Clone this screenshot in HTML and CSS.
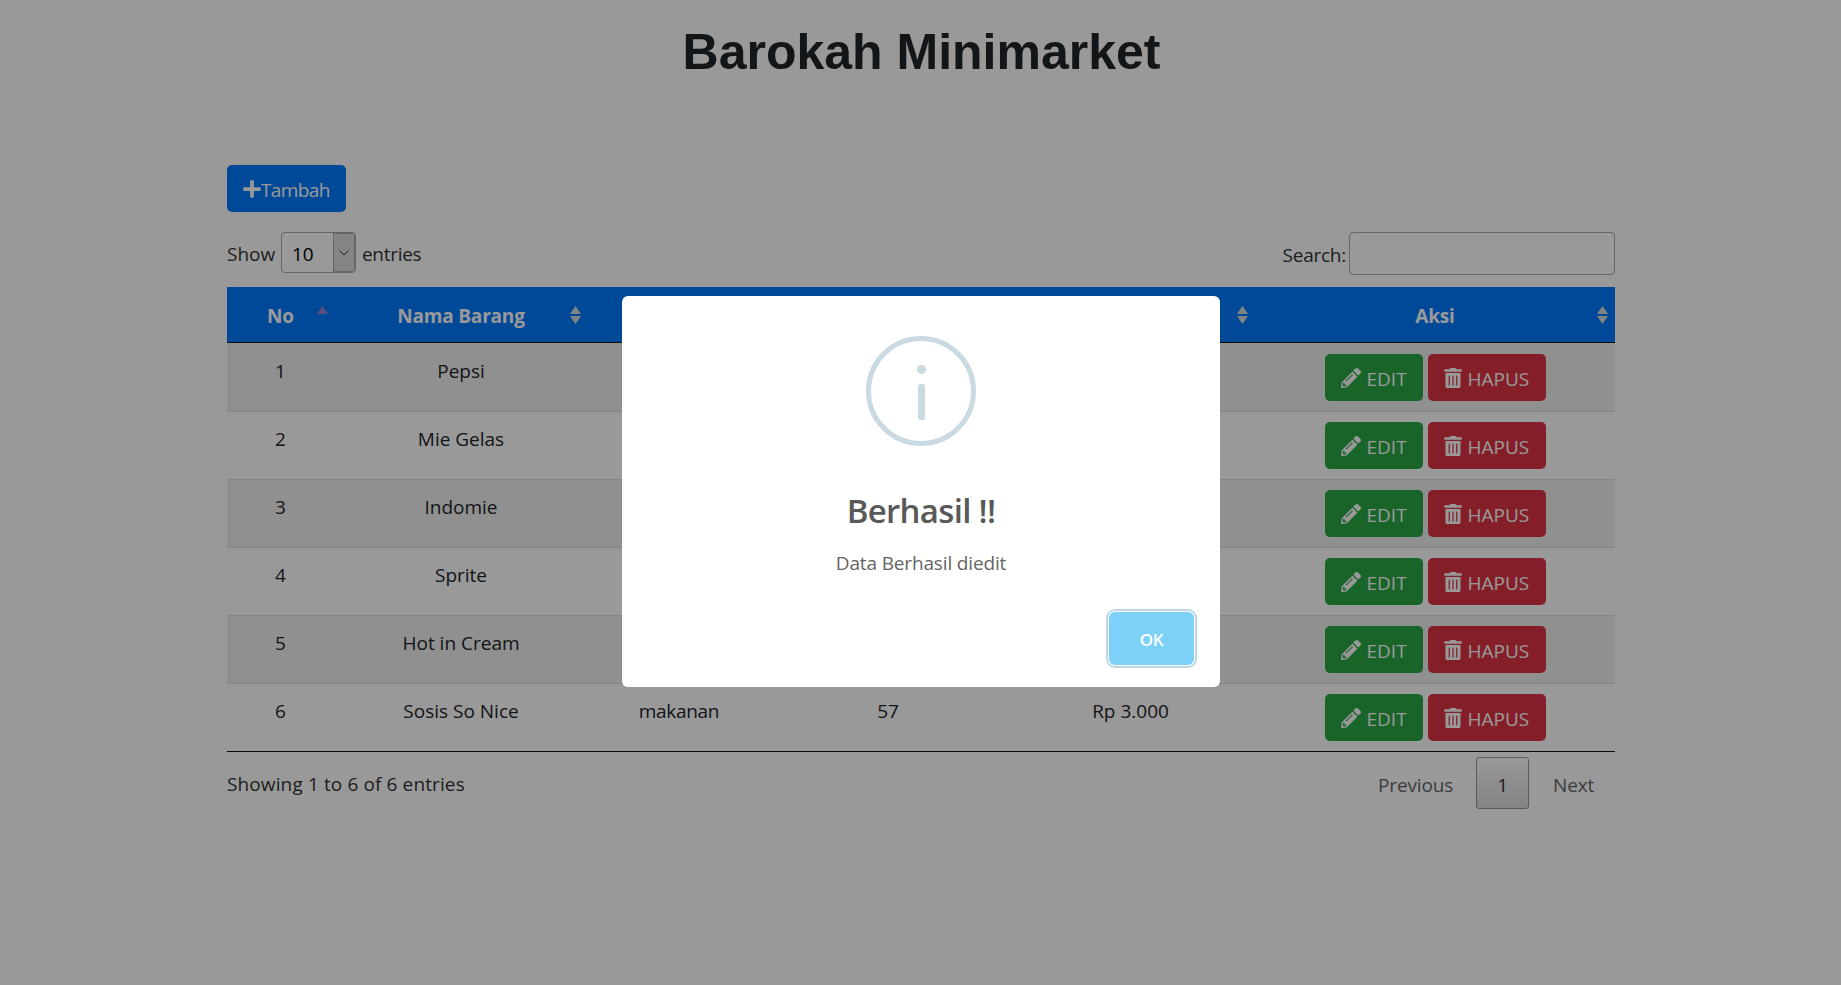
FILE: index.html
```html
<!DOCTYPE html>
<html lang="id">
<head>
<meta charset="utf-8">
<title>Barokah Minimarket</title>
<link rel="stylesheet" href="styles.css">
</head>
<body>
<svg width="0" height="0" class="sprite" aria-hidden="true">
  <symbol id="plus" viewBox="0 0 448 512"><path d="M416 208H272V64c0-17.700-14.300-32-32-32h-32c-17.700 0-32 14.300-32 32v144H32c-17.700 0-32 14.300-32 32v32c0 17.700 14.300 32 32 32h144v144c0 17.700 14.300 32 32 32h32c17.700 0 32-14.300 32-32V304h144c17.700 0 32-14.300 32-32v-32c0-17.700-14.300-32-32-32z"/></symbol>
  <symbol id="pencil" viewBox="0 0 512 512"><path d="M497.900 142.100l-46.100 46.100c-4.700 4.700-12.300 4.700-17 0l-111-111c-4.700-4.700-4.700-12.300 0-17l46.100-46.100c18.700-18.700 49.100-18.700 67.900 0l60.100 60.100c18.800 18.700 18.800 49.100 0 67.900zM284.200 99.800L21.600 362.400.4 483.900c-2.900 16.400 11.400 30.600 27.800 27.800l121.500-21.300 262.600-262.600c4.700-4.700 4.700-12.300 0-17l-111-111c-4.800-4.700-12.400-4.700-17.100 0zM124.100 339.900c-5.500-5.500-5.500-14.300 0-19.800l154-154c5.500-5.500 14.300-5.500 19.800 0s5.500 14.300 0 19.800l-154 154c-5.500 5.500-14.300 5.500-19.800 0zM88 424h48v36.300l-64.500 11.300-31.100-31.100L51.700 376H88v48z"/></symbol>
  <symbol id="trash" viewBox="0 0 448 512"><path d="M32 464a48 48 0 0 0 48 48h288a48 48 0 0 0 48-48V128H32zm272-256a16 16 0 0 1 32 0v224a16 16 0 0 1-32 0zm-96 0a16 16 0 0 1 32 0v224a16 16 0 0 1-32 0zm-96 0a16 16 0 0 1 32 0v224a16 16 0 0 1-32 0zM432 32H312l-9.400-18.700A24 24 0 0 0 281.100 0H166.800a23.700 23.700 0 0 0-21.400 13.300L136 32H16A16 16 0 0 0 0 48v32a16 16 0 0 0 16 16h416a16 16 0 0 0 16-16V48a16 16 0 0 0-16-16z"/></symbol>
  <symbol id="sort" viewBox="0 0 11 18"><path d="M5.500 0L11 8H0zM0 10h11L5.500 18z"/></symbol>
  <symbol id="sort-asc" viewBox="0 0 11 18"><path d="M5.500 0L11 8H0z"/></symbol>
</svg>

<main class="container">
  <h1 class="title">Barokah Minimarket</h1>
  <a class="btn btn-primary"><svg class="i-plus"><use href="#plus"/></svg><span>Tambah</span></a>

  <div class="controls">
    <div class="length">
      <span class="t-show">Show</span>
      <span class="select"><span class="value">10</span><span class="arrow"><svg viewBox="0 0 10 6"><path d="M.5.5L5 5 9.500.5"/></svg></span></span>
      <span class="t-entries">entries</span>
    </div>
    <label class="search"><span>Search:</span><input type="text"></label>
  </div>

  <table class="items">
    <colgroup><col class="c1"><col class="c2"><col class="c3"><col class="c4"><col class="c5"><col class="c6"></colgroup>
    <thead>
      <tr>
        <th>No<svg class="sort asc"><use href="#sort-asc"/></svg></th>
        <th>Nama Barang<svg class="sort"><use href="#sort"/></svg></th>
        <th>Kategori<svg class="sort"><use href="#sort"/></svg></th>
        <th>Stok<svg class="sort"><use href="#sort"/></svg></th>
        <th>Harga<svg class="sort"><use href="#sort"/></svg></th>
        <th>Aksi<svg class="sort"><use href="#sort"/></svg></th>
      </tr>
    </thead>
    <tbody>
      <tr><td>1</td><td>Pepsi</td><td></td><td></td><td></td><td><div class="actions"><a class="btn btn-success"><svg class="i-pencil"><use href="#pencil"/></svg><span>EDIT</span></a><a class="btn btn-danger"><svg class="i-trash"><use href="#trash"/></svg><span>HAPUS</span></a></div></td></tr>
      <tr><td>2</td><td>Mie Gelas</td><td></td><td></td><td></td><td><div class="actions"><a class="btn btn-success"><svg class="i-pencil"><use href="#pencil"/></svg><span>EDIT</span></a><a class="btn btn-danger"><svg class="i-trash"><use href="#trash"/></svg><span>HAPUS</span></a></div></td></tr>
      <tr><td>3</td><td>Indomie</td><td></td><td></td><td></td><td><div class="actions"><a class="btn btn-success"><svg class="i-pencil"><use href="#pencil"/></svg><span>EDIT</span></a><a class="btn btn-danger"><svg class="i-trash"><use href="#trash"/></svg><span>HAPUS</span></a></div></td></tr>
      <tr><td>4</td><td>Sprite</td><td></td><td></td><td></td><td><div class="actions"><a class="btn btn-success"><svg class="i-pencil"><use href="#pencil"/></svg><span>EDIT</span></a><a class="btn btn-danger"><svg class="i-trash"><use href="#trash"/></svg><span>HAPUS</span></a></div></td></tr>
      <tr><td>5</td><td>Hot in Cream</td><td></td><td></td><td></td><td><div class="actions"><a class="btn btn-success"><svg class="i-pencil"><use href="#pencil"/></svg><span>EDIT</span></a><a class="btn btn-danger"><svg class="i-trash"><use href="#trash"/></svg><span>HAPUS</span></a></div></td></tr>
      <tr><td>6</td><td>Sosis So Nice</td><td class="tight">makanan</td><td>57</td><td>Rp 3.000</td><td><div class="actions"><a class="btn btn-success"><svg class="i-pencil"><use href="#pencil"/></svg><span>EDIT</span></a><a class="btn btn-danger"><svg class="i-trash"><use href="#trash"/></svg><span>HAPUS</span></a></div></td></tr>
    </tbody>
  </table>

  <div class="footer">
    <div class="info">Showing 1 to 6 of 6 entries</div>
    <div class="pages"><a class="page prev">Previous</a><a class="page current">1</a><a class="page next">Next</a></div>
  </div>
</main>

<div class="overlay">
  <div class="modal">
    <svg class="info-icon" viewBox="0 0 110 110"><circle class="ring" cx="55" cy="55" r="52.500"/><circle cx="55.500" cy="33.500" r="4.500"/><rect x="52" y="48" width="7" height="36" rx="2.500"/></svg>
    <div class="modal-title">Berhasil !!</div>
    <div class="modal-text">Data Berhasil diedit</div>
    <div class="modal-footer"><button class="ok">OK</button></div>
  </div>
</div>
</body>
</html>
```

FILE: styles.css
```css
* { box-sizing: border-box; }
body { margin: 0; height: 985px; overflow: hidden; background: #fff; color: #212529; font: 19px/30px "Open Sans", "Noto Sans", sans-serif; }
.sprite { display: block; position: absolute; }
.container { width: 1388px; margin-left: 227px; padding-top: 22px; }
.title { margin: 0 0 83px; text-align: center; font: bold 50px/60px "Liberation Sans", Arial, sans-serif; padding-left: 1px; }
.btn { display: inline-flex; align-items: center; height: 47px; padding-top: 1px; border-radius: 5px; color: #fff; white-space: nowrap; }
.btn svg { fill: currentColor; flex: none; }
.btn span { padding-top: 2px; }
.btn-primary { display: flex; width: 119px; padding-left: 16px; background: #007bff; letter-spacing: -.6px; }
.btn-success { width: 98px; padding-left: 16px; background: #28a745; }
.btn-danger { width: 118px; padding-left: 16px; background: #dc3545; }
.i-plus { width: 18px; height: 20px; }
.i-pencil { width: 20px; height: 20px; margin-right: 6px; }
.i-trash { width: 18px; height: 20px; margin-right: 6px; }

.controls { display: flex; justify-content: space-between; height: 55px; margin-top: 20px; color: #333; }
.length { display: flex; align-items: center; height: 41px; }
.t-show { width: 54px; padding-top: 2px; }
.select { display: flex; width: 75px; height: 41px; border: 1px solid #aaa; border-radius: 4px; overflow: hidden; color: #000; }
.value { flex: 1; padding: 6px 0 0 10px; }
.arrow { width: 22px; background: #dcdcdc; border: 1px solid #aaa; display: flex; align-items: center; justify-content: center; }
.arrow svg { width: 10px; height: 6px; fill: none; stroke: #333; }
.t-entries { margin-left: 6px; padding-top: 2px; letter-spacing: -.3px; }
.search { display: flex; align-items: center; height: 43px; gap: 3px; letter-spacing: -.25px; }
.search span { padding-top: 2px; }
.search input { width: 266px; height: 43px; border: 1px solid #aaa; border-radius: 4px; background: transparent; padding: 6px; font: inherit; }

.items { width: 1388px; table-layout: fixed; border-collapse: separate; border-spacing: 0; text-align: center; border-bottom: 1px solid #111; }
.c1 { width: 107px; } .c2 { width: 254px; } .c3 { width: 182px; } .c4 { width: 236px; } .c5 { width: 249px; } .c6 { width: 360px; }
.items th { position: relative; height: 56px; padding: 3px 0 0; background: #007bff; color: #fff; border-bottom: 1px solid #111; font-weight: 700; letter-spacing: -.2px; }
.sort { position: absolute; right: 7px; top: 19px; width: 11px; height: 18px; fill: #d9dcdc; }
.sort.asc { right: 6px; fill: #8f86cc; }
.items td { height: 68px; padding: 12px 0 0; vertical-align: top; border-top: 1px solid #ddd; }
.items tbody tr:first-child td { border-top: 0; padding-top: 13px; }
.items tbody tr:nth-child(odd) td { background: #f1f1f1; }
.items .tight { letter-spacing: -.3px; }
.actions { display: flex; justify-content: center; gap: 5px; margin-top: -2px; }

.footer { display: flex; justify-content: space-between; padding-top: 5px; color: #333; }
.info { padding-top: 12px; letter-spacing: .12px; }
.pages { display: flex; height: 52px; color: #666; }
.page { padding-top: 13px; text-align: center; letter-spacing: -.15px; }
.prev { width: 74px; margin-right: 24px; }
.current { width: 53px; border: 1px solid #979797; border-radius: 3px; background: linear-gradient(#fff, #dcdcdc); color: #333; padding-top: 12px; }
.next { margin: 0 21px 0 24px; width: 41px; }

.overlay { position: absolute; inset: 0; background: rgba(0, 0, 0, .4); padding: 296px 0 0 622px; }
.modal { width: 598px; height: 391px; border-radius: 6px; background: #fff; display: flex; flex-direction: column; align-items: center; padding-top: 40px; }
.info-icon { width: 110px; height: 110px; fill: #c9dae1; }
.ring { fill: none; stroke: #c9dae1; stroke-width: 5; }
.modal-title { margin-top: 40px; font-size: 33px; line-height: 50px; font-weight: 600; letter-spacing: -.7px; color: #595959; white-space: nowrap; }
.modal-text { margin-top: 12px; letter-spacing: -.15px; color: #646464; white-space: nowrap; }
.modal-footer { align-self: stretch; display: flex; justify-content: flex-end; padding: 34px 26px 0 0; }
.ok { width: 85px; height: 53px; padding: 2px 0 0; border: 0; border-radius: 6px; background: #7cd1f9; color: #fff; font: 600 17px "Open Sans", sans-serif; letter-spacing: -.4px; box-shadow: 0 0 0 1px #fff, 0 0 0 3px #bfd6e4; }
```
